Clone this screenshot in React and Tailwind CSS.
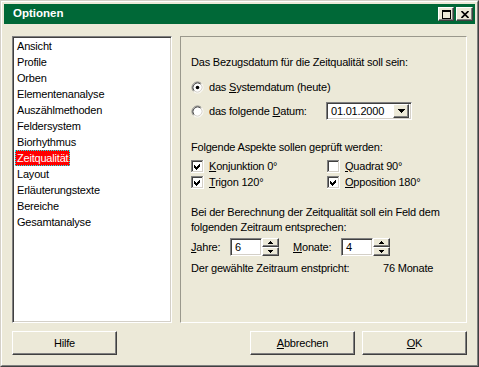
import React from "react";

const raised =
  "bg-[#ECE9D8] border border-t-white border-l-white border-r-[#404040] border-b-[#404040] shadow-[inset_-1px_-1px_0_#808080]";
const sunken2 =
  "border border-t-[#808080] border-l-[#808080] border-r-white border-b-white shadow-[inset_1px_1px_0_#404040,inset_-1px_-1px_0_#D4D0C8]";

function Radio({ checked }) {
  return (
    <svg width="13" height="13" viewBox="0 0 13 13" className="shrink-0">
      <circle cx="6.5" cy="6.5" r="5" fill="white" />
      <path d="M2.61 10.39 A5.5 5.5 0 0 1 10.39 2.61" stroke="#808080" fill="none" />
      <path d="M10.39 2.61 A5.5 5.5 0 0 1 2.61 10.39" stroke="#ffffff" fill="none" />
      <path d="M3.32 9.68 A4.5 4.5 0 0 1 9.68 3.32" stroke="#404040" fill="none" />
      <path d="M9.68 3.32 A4.5 4.5 0 0 1 3.32 9.68" stroke="#D4D0C8" fill="none" />
      {checked && <circle cx="6.5" cy="6.5" r="1.8" fill="black" />}
    </svg>
  );
}

function Check({ checked }) {
  return (
    <svg width="13" height="13" viewBox="0 0 13 13" className="shrink-0" shapeRendering="crispEdges">
      <rect x="0" y="0" width="13" height="13" fill="white" />
      <rect x="0" y="0" width="12" height="1" fill="#808080" />
      <rect x="0" y="0" width="1" height="12" fill="#808080" />
      <rect x="1" y="1" width="10" height="1" fill="#404040" />
      <rect x="1" y="1" width="1" height="10" fill="#404040" />
      <rect x="1" y="11" width="11" height="1" fill="#D4D0C8" />
      <rect x="11" y="1" width="1" height="11" fill="#D4D0C8" />
      <rect x="2" y="2" width="9" height="9" fill="white" />
      {checked && (
        <polygon points="3,5 5,7 9,3 9,6 5,10 3,8" fill="black" />
      )}
    </svg>
  );
}

function U({ children }) {
  return <span className="underline underline-offset-[1px]">{children}</span>;
}

function Spin({ value }) {
  return (
    <div className="flex h-[18px]">
      <div className={`w-[32px] h-[18px] bg-white ${sunken2} pl-[4px] flex items-center`}>
        {value}
      </div>
      <div className="w-[17px] h-[18px] flex flex-col">
        <div className={`${raised} h-[9px] flex items-center justify-center`}>
          <svg width="5" height="3" viewBox="0 0 5 3" shapeRendering="crispEdges">
            <polygon points="2.5,0 5,3 0,3" fill="black" />
          </svg>
        </div>
        <div className={`${raised} h-[9px] flex items-center justify-center`}>
          <svg width="5" height="3" viewBox="0 0 5 3" shapeRendering="crispEdges">
            <polygon points="0,0 5,0 2.5,3" fill="black" />
          </svg>
        </div>
      </div>
    </div>
  );
}

export default function App() {
  const items = [
    "Ansicht",
    "Profile",
    "Orben",
    "Elementenanalyse",
    "Auszählmethoden",
    "Feldersystem",
    "Biorhythmus",
    "Zeitqualität",
    "Layout",
    "Erläuterungstexte",
    "Bereiche",
    "Gesamtanalyse",
  ];
  return (
    <div
      className="w-[479px] h-[367px] border border-t-[#D4D0C8] border-l-[#D4D0C8] border-r-[#404040] border-b-[#404040] text-black text-[11px] tracking-[-0.2px]"
      style={{ fontFamily: '"Liberation Sans", Arial, sans-serif' }}
    >
      <div className="w-full h-full bg-[#ECE9D8] border border-t-white border-l-white border-r-[#808080] border-b-[#808080] p-[2px] flex flex-col">
        {/* Title bar */}
        <div className="h-[20px] bg-[#006837] flex items-center pl-[9px] pr-[2px] shrink-0">
          <span className="text-white font-bold text-[11.5px] tracking-normal">Optionen</span>
          <div className="ml-auto flex gap-[2px]">
            <div className={`${raised} w-[16px] h-[14px] flex items-center justify-center`}>
              <svg width="9" height="9" viewBox="0 0 9 9" shapeRendering="crispEdges">
                <rect x="0" y="0" width="9" height="2" fill="black" />
                <rect x="0" y="0" width="1" height="9" fill="black" />
                <rect x="8" y="0" width="1" height="9" fill="black" />
                <rect x="0" y="8" width="9" height="1" fill="black" />
              </svg>
            </div>
            <div className={`${raised} w-[17px] h-[14px] flex items-center justify-center`}>
              <svg width="8" height="7" viewBox="0 0 8 7">
                <path d="M0.5 0 L7.5 7 M7.5 0 L0.5 7" stroke="black" strokeWidth="1.6" />
              </svg>
            </div>
          </div>
        </div>

        {/* Body */}
        <div className="flex-1 flex flex-col px-[8px] pt-[12px] pb-[8px] gap-[8px]">
          <div className="flex gap-[8px] h-[287px]">
            {/* List */}
            <div className={`w-[160px] h-full bg-white ${sunken2} p-[1px] pt-[1px]`}>
              <div className="flex flex-col pl-[1px]">
                {items.map((it) => (
                  <div key={it} className="h-[16px] leading-[16px]">
                    {it === "Zeitqualität" ? (
                      <span className="inline-block h-[16px] px-[2px] bg-[#FF0000] text-white outline-1 outline-dotted outline-[#00FFFF] -outline-offset-1">
                        {it}
                      </span>
                    ) : (
                      <span className="inline-block px-[2px]">{it}</span>
                    )}
                  </div>
                ))}
              </div>
            </div>

            {/* Panel */}
            <div className="flex-1 h-full border border-t-[#9A988C] border-l-[#9A988C] border-r-white border-b-white pl-[10px] pt-[18px] flex flex-col">
              <div className="h-[14px] flex items-center">
                Das Bezugsdatum für die Zeitqualität soll sein:
              </div>
              <div className="h-[16px] mt-[10px] flex items-center gap-[5px]">
                <Radio checked />
                <span>
                  das <U>S</U>ystemdatum (heute)
                </span>
              </div>
              <div className="h-[18px] mt-[7px] flex items-center">
                <div className="w-[135px] flex items-center gap-[5px]">
                  <Radio />
                  <span>
                    das folgende <U>D</U>atum:
                  </span>
                </div>
                <div className={`w-[86px] h-[18px] bg-white ${sunken2} flex items-center pl-[4px] pr-[2px]`}>
                  <span>01.01.2000</span>
                  <div className={`${raised} ml-auto w-[16px] h-[14px] flex items-center justify-center`}>
                    <svg width="7" height="4" viewBox="0 0 7 4" shapeRendering="crispEdges">
                      <polygon points="0,0 7,0 3.5,4" fill="black" />
                    </svg>
                  </div>
                </div>
              </div>

              <div className="h-[14px] mt-[20px] flex items-center">
                Folgende Aspekte sollen geprüft werden:
              </div>
              <div className="h-[16px] mt-[4px] flex items-center">
                <div className="w-[136px] flex items-center gap-[5px]">
                  <Check checked />
                  <span>
                    <U>K</U>onjunktion 0°
                  </span>
                </div>
                <div className="flex items-center gap-[5px]">
                  <Check />
                  <span>
                    <U>Q</U>uadrat 90°
                  </span>
                </div>
              </div>
              <div className="h-[16px] flex items-center">
                <div className="w-[136px] flex items-center gap-[5px]">
                  <Check checked />
                  <span>
                    <U>T</U>rigon 120°
                  </span>
                </div>
                <div className="flex items-center gap-[5px]">
                  <Check checked />
                  <span>
                    <U>O</U>pposition 180°
                  </span>
                </div>
              </div>

              <div className="mt-[15px] leading-[15px]">
                Bei der Berechnung der Zeitqualität soll ein Feld dem
                <br />
                folgenden Zeitraum entsprechen:
              </div>
              <div className="h-[18px] mt-[3px] flex items-center">
                <span className="w-[39px]">
                  <U>J</U>ahre:
                </span>
                <Spin value="6" />
                <span className="w-[48px] ml-[14px]">
                  <U>M</U>onate:
                </span>
                <Spin value="4" />
              </div>
              <div className="h-[14px] mt-[5px] flex items-center">
                <span className="w-[192px] shrink-0 whitespace-nowrap">
                  Der gewählte Zeitraum enstpricht:
                </span>
                <span>76 Monate</span>
              </div>
            </div>
          </div>

          {/* Buttons */}
          <div className="flex h-[24px]">
            <div className={`${raised} w-[105px] h-[24px] flex items-center justify-center`}>Hilfe</div>
            <div className={`${raised} ml-auto w-[105px] h-[24px] flex items-center justify-center`}>
              <span>
                <U>A</U>bbrechen
              </span>
            </div>
            <div className={`${raised} ml-[7px] w-[105px] h-[24px] flex items-center justify-center`}>
              <span>
                <U>O</U>K
              </span>
            </div>
          </div>
        </div>
      </div>
    </div>
  );
}
